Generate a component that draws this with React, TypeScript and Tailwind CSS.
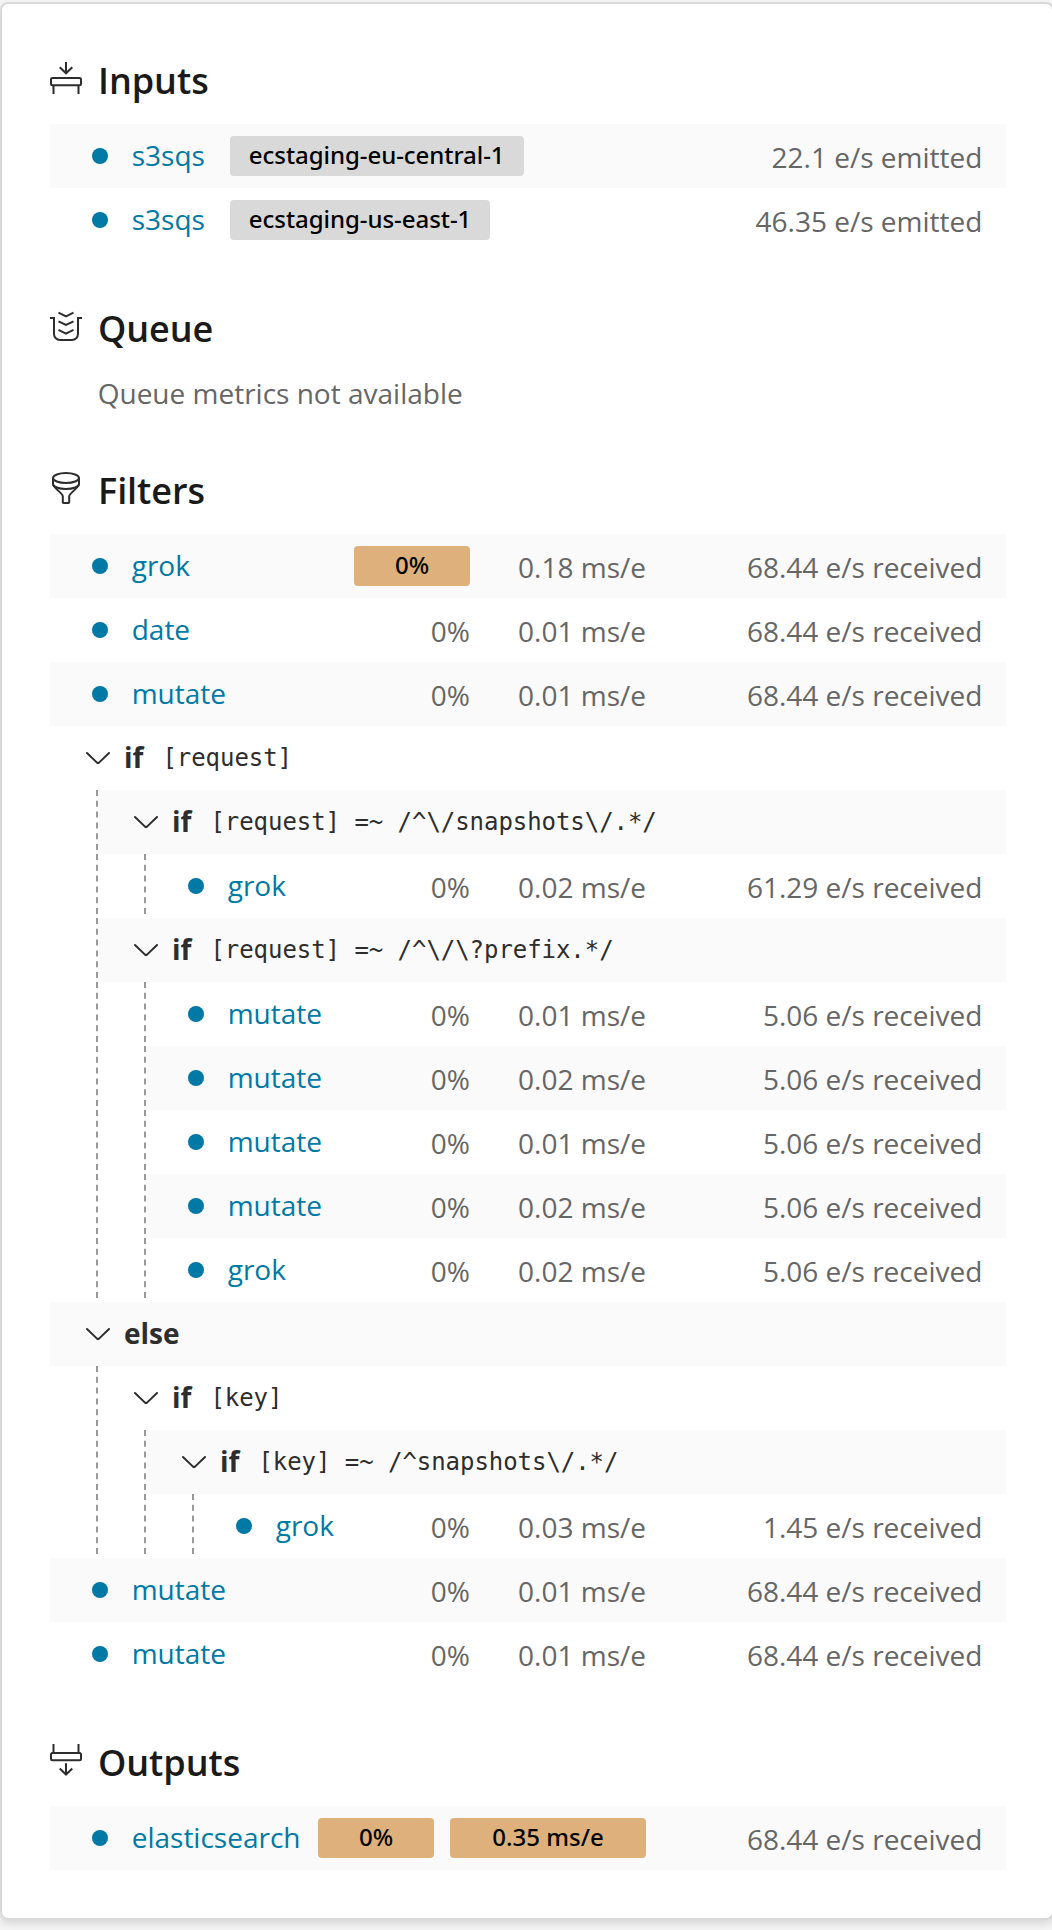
import React from "react";

type IconProps = { children: React.ReactNode };

function Glyph({ children }: IconProps) {
  return (
    <svg
      width="32"
      height="32"
      viewBox="0 0 32 32"
      fill="none"
      stroke="#2d2d2d"
      strokeWidth="2"
      className="shrink-0"
    >
      {children}
    </svg>
  );
}

const InputIcon = () => (
  <Glyph>
    <path d="M16 0v11" />
    <path d="M9.7 5.3 16 11.3l6.300-6" />
    <rect x="1" y="16" width="30" height="7.200" rx="1.500" />
    <path d="M3.500 24v8M28.500 24v8" />
  </Glyph>
);

const QueueIcon = () => (
  <Glyph>
    <path d="M0 8h4v16a6 6 0 0 0 6 6h12a6 6 0 0 0 6-6V8h4" />
    <path d="M8.500 2.700 16 6.500l7.500-3.800M8.500 11.300 16 15l7.500-3.700M8.500 19.900 16 23.600l7.500-3.700" />
  </Glyph>
);

const FilterIcon = () => (
  <Glyph>
    <ellipse cx="16" cy="6" rx="13" ry="5" />
    <path d="M3 6v6c0 2.800 5.800 5 13 5s13-2.200 13-5V6" />
    <path d="M3.300 13c.6 2.500 9.500 9 9.500 11v6.300a.7.7 0 0 0 .7.700h5a.7.7 0 0 0 .7-.7V24c0-2 8.900-8.500 9.500-11" />
  </Glyph>
);

const OutputIcon = () => (
  <Glyph>
    <path d="M3.500 0v8M28.500 0v8" />
    <rect x="1" y="9" width="30" height="7.200" rx="1.500" />
    <path d="M16 19.300v11" />
    <path d="M9.700 24.500 16 30.500l6.300-6" />
  </Glyph>
);

function Heading({ icon, title }: { icon: React.ReactNode; title: string }) {
  return (
    <div className="flex h-12 items-start gap-4">
      {icon}
      <h2 className="pt-px text-[36px] leading-9 font-semibold tracking-[-0.05px] text-[#1a1a1a]">{title}</h2>
    </div>
  );
}

function Guides({ depth }: { depth: number }) {
  if (!depth) return null;
  return (
    <div className="flex h-full">
      {Array.from({ length: depth }, (_, i) => (
        <div
          key={i}
          className="h-[60px] w-12 border-l-2 border-dashed border-[#999] first:ml-[46px] last:w-0.5"
        />
      ))}
    </div>
  );
}

function Row({ depth = 0, shaded, children }: { depth?: number; shaded?: boolean; children: React.ReactNode }) {
  return (
    <div className="flex h-16">
      <Guides depth={depth} />
      <div className={`flex flex-1 items-center pr-6 ${shaded ? "bg-[#fafafa]" : ""}`}>{children}</div>
    </div>
  );
}

function Plugin({ name }: { name: string }) {
  return (
    <div className="flex items-center gap-[23.7px] pl-[42px]">
      <span className="h-4 w-4 rounded-full bg-[#0079a5]" />
      <span className="pb-0.5 text-[28px] leading-10 text-[#0079a5]">{name}</span>
    </div>
  );
}

function Metric({ children, wide }: { children: React.ReactNode; wide?: boolean }) {
  return (
    <div className={`pt-0.5 text-right text-[28px] leading-10 text-[#666] ${wide ? "w-44" : "w-[116px]"}`}>
      {children}
    </div>
  );
}

function Rate({ children }: { children: React.ReactNode }) {
  return <div className="-mr-[0.4px] w-[336.4px] pt-0.5 text-right text-[28px] leading-10 text-[#666]">{children}</div>;
}

function HotBadge({ children, wide }: { children: React.ReactNode; wide?: boolean }) {
  return (
    <div
      className={`h-10 rounded bg-[#deb07c] text-center font-['Noto_Sans','Open_Sans',sans-serif] text-2xl leading-[38px] font-medium text-black ${wide ? "w-[196px]" : "w-[116px]"}`}
    >
      {children}
    </div>
  );
}

type FilterProps = {
  name: string;
  depth?: number;
  shaded?: boolean;
  cpuHot?: boolean;
  time: string;
  rate: string;
};

function Filter({ name, depth = 0, shaded, cpuHot, time, rate }: FilterProps) {
  return (
    <Row depth={depth} shaded={shaded}>
      <Plugin name={name} />
      <div className="ml-auto flex items-center">
        {cpuHot ? <HotBadge>0%</HotBadge> : <Metric>0%</Metric>}
        <Metric wide>{time}</Metric>
        <Rate>{rate}</Rate>
      </div>
    </Row>
  );
}

function Branch({ keyword, test, depth = 0, shaded }: { keyword: string; test?: string; depth?: number; shaded?: boolean }) {
  return (
    <Row depth={depth} shaded={shaded}>
      <div className="flex items-center pl-9">
        <svg width="24" height="14" viewBox="0 0 24 14" fill="none" stroke="#2d2d2d" strokeWidth="2" strokeLinecap="round" strokeLinejoin="round">
          <path d="M1 2l10 9.600q1 .8 2 0L23 2" />
        </svg>
        <span className="pb-0.5 pl-3.5 text-[28px] leading-10 font-bold text-[#2d2d2d]">{keyword}</span>
        {test && (
          <code className="pl-[19px] font-['DejaVu_Sans_Mono',monospace] text-2xl tracking-[-0.05px] text-[#2d2d2d]">
            {test}
          </code>
        )}
      </div>
    </Row>
  );
}

function Input({ name, id, rate, shaded }: { name: string; id: string; rate: string; shaded?: boolean }) {
  return (
    <Row shaded={shaded}>
      <Plugin name={name} />
      <span className="ml-[25px] h-10 rounded bg-[#d9d9d9] px-[19px] font-['Noto_Sans','Open_Sans',sans-serif] text-2xl leading-[38px] font-medium tracking-[-0.05px] text-black">
        {id}
      </span>
      <div className="ml-auto">
        <Rate>{rate}</Rate>
      </div>
    </Row>
  );
}

export default function App() {
  return (
    <div className="h-[1930px] w-full overflow-hidden bg-[#f5f5f5] pt-0.5 font-['Open_Sans',sans-serif]">
      <main className="h-[1918px] w-[1054px] rounded-lg border-2 border-[#d9d9d9] bg-white pt-[58px] pr-[46px] pl-12 shadow-[0_4px_8px_rgba(0,0,0,0.12)]">
        <section className="h-[248px]">
          <div className="mb-3.5">
            <Heading icon={<InputIcon />} title="Inputs" />
          </div>
          <Input shaded name="s3sqs" id="ecstaging-eu-central-1" rate="22.1 e/s emitted" />
          <Input name="s3sqs" id="ecstaging-us-east-1" rate="46.35 e/s emitted" />
        </section>
        <section className="h-[162px]">
          <Heading icon={<QueueIcon />} title="Queue" />
          <p className="pt-[15px] pl-[47.7px] text-[28px] leading-10 text-[#666]">Queue metrics not available</p>
        </section>
        <section className="h-[1272px]">
          <div className="mb-3.5">
            <Heading icon={<FilterIcon />} title="Filters" />
          </div>
          <Filter shaded name="grok" cpuHot time="0.18 ms/e" rate="68.44 e/s received" />
          <Filter name="date" time="0.01 ms/e" rate="68.44 e/s received" />
          <Filter shaded name="mutate" time="0.01 ms/e" rate="68.44 e/s received" />
          <Branch keyword="if" test="[request]" />
          <Branch shaded depth={1} keyword="if" test="[request] =~ /^\/snapshots\/.*/" />
          <Filter depth={2} name="grok" time="0.02 ms/e" rate="61.29 e/s received" />
          <Branch shaded depth={1} keyword="if" test="[request] =~ /^\/\?prefix.*/" />
          <Filter depth={2} name="mutate" time="0.01 ms/e" rate="5.06 e/s received" />
          <Filter shaded depth={2} name="mutate" time="0.02 ms/e" rate="5.06 e/s received" />
          <Filter depth={2} name="mutate" time="0.01 ms/e" rate="5.06 e/s received" />
          <Filter shaded depth={2} name="mutate" time="0.02 ms/e" rate="5.06 e/s received" />
          <Filter depth={2} name="grok" time="0.02 ms/e" rate="5.06 e/s received" />
          <Branch shaded keyword="else" />
          <Branch depth={1} keyword="if" test="[key]" />
          <Branch shaded depth={2} keyword="if" test="[key] =~ /^snapshots\/.*/" />
          <Filter depth={3} name="grok" time="0.03 ms/e" rate="1.45 e/s received" />
          <Filter shaded name="mutate" time="0.01 ms/e" rate="68.44 e/s received" />
          <Filter name="mutate" time="0.01 ms/e" rate="68.44 e/s received" />
        </section>
        <section>
          <div className="mb-3.5">
            <Heading icon={<OutputIcon />} title="Outputs" />
          </div>
          <Row shaded>
            <Plugin name="elasticsearch" />
            <div className="ml-auto flex items-center">
              <div className="mr-4">
                <HotBadge>0%</HotBadge>
              </div>
              <HotBadge wide>0.35 ms/e</HotBadge>
              <Rate>68.44 e/s received</Rate>
            </div>
          </Row>
        </section>
      </main>
    </div>
  );
}
